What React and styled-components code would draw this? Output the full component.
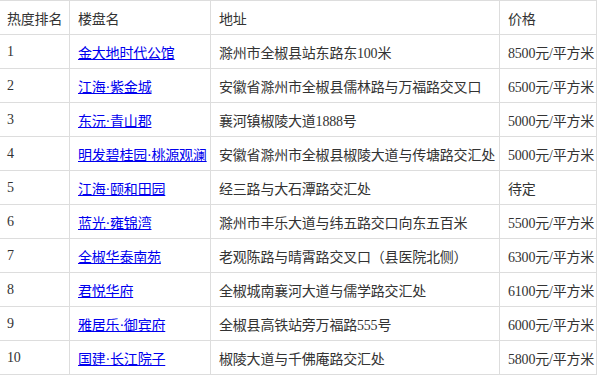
import React from "react";
import styled, { createGlobalStyle } from "styled-components";

const GlobalStyle = createGlobalStyle`
  body {
    margin: 0;
    background: #fff;
    font-family: "Liberation Serif", "Noto Sans CJK SC", serif;
  }
`;

const Table = styled.table`
  border-collapse: collapse;
  table-layout: fixed;
  width: 598px;
  margin-left: -2px;
  font-size: 14px;
  letter-spacing: -0.2px;
  color: #333;
`;

const Cell = styled.td`
  height: 33px;
  padding: 0 8px;
  border: 1px solid #ddd;
  text-align: left;
  font-weight: normal;
  white-space: nowrap;
  overflow: hidden;
  vertical-align: middle;
`;

const Head = styled(Cell).attrs({ as: "th" })``;

const Link = styled.a`
  color: #0000ee;
  text-decoration: underline;
`;

const rows = [
  ["金大地时代公馆", "滁州市全椒县站东路东100米", "8500元/平方米"],
  ["江海·紫金城", "安徽省滁州市全椒县儒林路与万福路交叉口", "6500元/平方米"],
  ["东沅·青山郡", "襄河镇椒陵大道1888号", "5000元/平方米"],
  ["明发碧桂园·桃源观澜", "安徽省滁州市全椒县椒陵大道与传塘路交汇处", "5000元/平方米"],
  ["江海·颐和田园", "经三路与大石潭路交汇处", "待定"],
  ["蓝光·雍锦湾", "滁州市丰乐大道与纬五路交口向东五百米", "5500元/平方米"],
  ["全椒华泰南苑", "老观陈路与晴霄路交叉口（县医院北侧）", "6300元/平方米"],
  ["君悦华府", "全椒城南襄河大道与儒学路交汇处", "6100元/平方米"],
  ["雅居乐·御宾府", "全椒县高铁站旁万福路555号", "6000元/平方米"],
  ["国建·长江院子", "椒陵大道与千佛庵路交汇处", "5800元/平方米"],
];

export default function App() {
  return (
    <>
      <GlobalStyle />
      <Table>
        <colgroup>
          <col style={{ width: 71 }} />
          <col style={{ width: 141 }} />
          <col style={{ width: 289 }} />
          <col style={{ width: 97 }} />
        </colgroup>
        <thead>
          <tr>
            <Head>热度排名</Head>
            <Head>楼盘名</Head>
            <Head>地址</Head>
            <Head>价格</Head>
          </tr>
        </thead>
        <tbody>
          {rows.map(([name, addr, price], i) => (
            <tr key={name}>
              <Cell>{i + 1}</Cell>
              <Cell>
                <Link href="#">{name}</Link>
              </Cell>
              <Cell>{addr}</Cell>
              <Cell>{price}</Cell>
            </tr>
          ))}
        </tbody>
      </Table>
    </>
  );
}
